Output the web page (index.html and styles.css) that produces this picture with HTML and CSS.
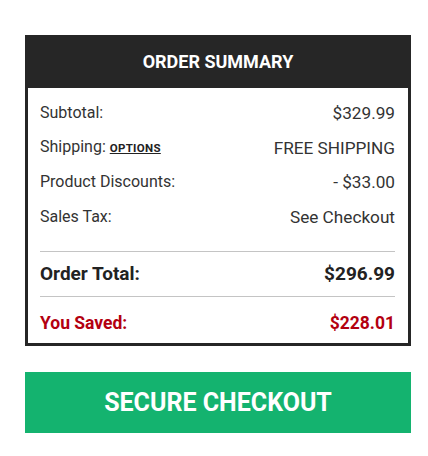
FILE: index.html
```html
<!DOCTYPE html>
<html lang="en">
<head>
    <meta charset="UTF-8">
    <meta name="viewport" content="width=device-width, initial-scale=1.0">
    <title>Order Summary</title>
    <link rel="stylesheet" href="styles.css">
</head>
<body>
    <div class="summary">
        <h2 class="summary-title">ORDER SUMMARY</h2>
        <div class="summary-body">
            <div class="row">
                <span>Subtotal:</span>
                <span class="value">$329.99</span>
            </div>
            <div class="row">
                <span>Shipping: <a href="#" class="options">OPTIONS</a></span>
                <span class="value">FREE SHIPPING</span>
            </div>
            <div class="row">
                <span>Product Discounts:</span>
                <span class="value">- $33.00</span>
            </div>
            <div class="row">
                <span>Sales Tax:</span>
                <span class="value">See Checkout</span>
            </div>
            <div class="row total">
                <span>Order Total:</span>
                <span>$296.99</span>
            </div>
            <div class="row saved">
                <span>You Saved:</span>
                <span>$228.01</span>
            </div>
        </div>
    </div>
    <button class="checkout">SECURE CHECKOUT</button>
</body>
</html>
```

FILE: styles.css
```css
body {
    font-family: Roboto, "Liberation Sans", Arial, sans-serif;
    background-color: #fff;
    margin: 0;
    padding: 35px 0 0 25px;
    color: #333;
}
.summary {
    width: 380px;
    border: 3px solid #262626;
    border-top: none;
}
.summary-title {
    height: 53px;
    line-height: 53px;
    background-color: #262626;
    color: #fff;
    text-align: center;
    font-size: 18px;
    font-weight: bold;
    margin: 0 -3px;
}
.summary-body {
    padding: 8px 13px 0 12px;
}
.row {
    display: flex;
    justify-content: space-between;
    align-items: center;
    height: 34.5px;
    font-size: 16px;
    line-height: 20px;
}
.value {
    font-size: 17.2px;
}
.options {
    color: #222;
    font-size: 11.5px;
    font-weight: bold;
    letter-spacing: 0.3px;
}
.total {
    margin-top: 17px;
    height: 44px;
    border-top: 1px solid #c4c4c4;
    border-bottom: 1px solid #c4c4c4;
    font-size: 19px;
    font-weight: bold;
    color: #222;
}
.saved {
    height: 46px;
    padding-top: 6px;
    box-sizing: border-box;
    font-size: 17.5px;
    font-weight: bold;
    color: #b30010;
}
.checkout {
    display: block;
    width: 386px;
    height: 61px;
    margin-top: 26px;
    background-color: #14b36f;
    color: #fff;
    border: none;
    font-family: Roboto, "Liberation Sans", Arial, sans-serif;
    font-size: 25px;
    font-weight: bold;
    cursor: pointer;
}
```
